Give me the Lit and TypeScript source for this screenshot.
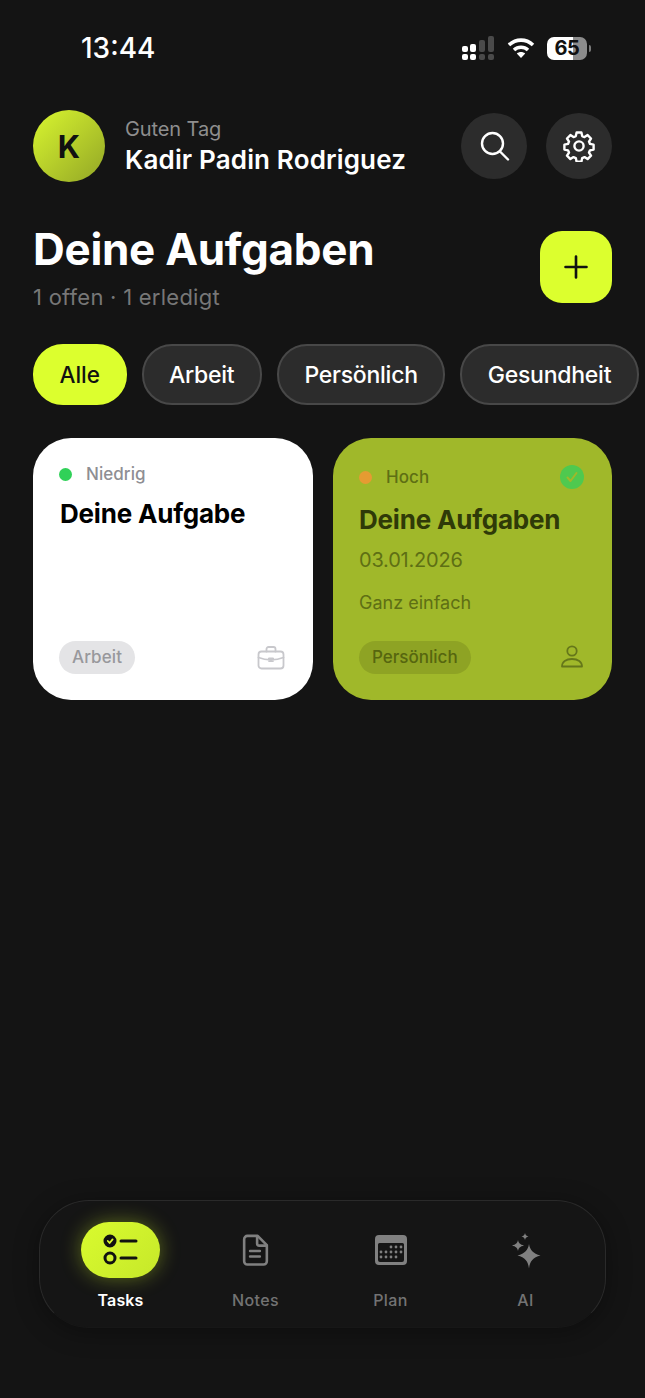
import { LitElement, html, css, svg } from 'lit';
import { customElement } from 'lit/decorators.js';

const ICONS = {
  search: svg`<circle cx="14.5" cy="13.5" r="10.5"/><path d="M22 21.5l8 8"/>`,
  gear: svg`<circle cx="16" cy="16" r="4.6"/><path d="M13.6 2.5h4.8l.8 3.6 2.3 1 3.1-2 3.4 3.4-2 3.1 1 2.3 3.6.8v4.8l-3.6.8-1 2.3 2 3.1-3.4 3.4-3.1-2-2.3 1-.8 3.6h-4.8l-.8-3.6-2.3-1-3.1 2-3.4-3.4 2-3.1-1-2.3-3.6-.8v-4.8l3.6-.8 1-2.3-2-3.1 3.4-3.4 3.1 2 2.3-1z"/>`,
  plus: svg`<path d="M16 4v24M4 16h24"/>`,
  briefcase: svg`<rect x="1.5" y="6.5" width="25" height="17" rx="3"/><path d="M9.5 6.5V4a2 2 0 0 1 2-2h5a2 2 0 0 1 2 2v2.5M1.5 12.5c4 1.6 8 2.3 12.5 2.3s8.500-.7 12.500-2.300M12 13.500h4v2.500h-4z"/>`,
  person: svg`<circle cx="12" cy="7" r="4.700"/><path d="M2 22.500c0-4.800 4-7.500 10-7.500s10 2.700 10 7.500z"/>`,
  note: svg`<path d="M5 1.500h9.500L23 10v15a3 3 0 0 1-3 3H5a3 3 0 0 1-3-3V4.500a3 3 0 0 1 3-3z"/><path d="M14 2v6.500a2 2 0 0 0 2 2h6.500M7.500 15.500h9M7.500 20.500h9"/>`,
};

type Card = {
  level: string;
  dot: string;
  title: string;
  date?: string;
  text?: string;
  tag: string;
  icon: 'briefcase' | 'person';
  done: boolean;
};

const CARDS: Card[] = [
  { level: 'Niedrig', dot: '#30d158', title: 'Deine Aufgabe', tag: 'Arbeit', icon: 'briefcase', done: false },
  {
    level: 'Hoch',
    dot: '#e69b32',
    title: 'Deine Aufgaben',
    date: '03.01.2026',
    text: 'Ganz einfach',
    tag: 'Persönlich',
    icon: 'person',
    done: true,
  },
];

const CHIPS = ['Alle', 'Arbeit', 'Persönlich', 'Gesundheit'];

@customElement('app-root')
export class AppRoot extends LitElement {
  static styles = css`
    :host {
      display: block;
      width: 645px;
      height: 1398px;
      overflow: hidden;
      background: #141414;
      color: #fff;
      font-family: Inter, 'Liberation Sans', sans-serif;
    }
    .page {
      height: 100%;
      display: flex;
      flex-direction: column;
    }
    .status {
      height: 96px;
      flex: none;
      display: flex;
      align-items: center;
      padding: 0 58px 0 81px;
      box-sizing: border-box;
    }
    .time {
      font-size: 28px;
      font-weight: 500;
      flex: 1;
    }
    .status-icons {
      display: flex;
      align-items: center;
      gap: 12px;
    }
    .battery {
      position: relative;
      width: 40px;
      height: 23px;
      border-radius: 7px;
      background: linear-gradient(90deg, #fff 0 65%, #8c8c8c 65% 100%);
      color: #111;
      font-size: 20px;
      font-weight: 700;
      line-height: 23px;
      text-align: center;
      letter-spacing: -0.5px;
    }
    .battery::after {
      content: '';
      position: absolute;
      right: -4px;
      top: 8px;
      width: 2px;
      height: 7px;
      border-radius: 0 2px 2px 0;
      background: #7a7a7a;
    }
    .header {
      display: flex;
      align-items: center;
      padding: 14px 33px 0;
    }
    .avatar {
      width: 72px;
      height: 72px;
      border-radius: 50%;
      background: linear-gradient(135deg, #d9f62f, #93a626);
      color: #111;
      font-size: 31px;
      font-weight: 700;
      display: flex;
      align-items: center;
      justify-content: center;
      flex: none;
    }
    .who {
      flex: 1;
      margin-left: 20px;
    }
    .hello {
      font-size: 20px;
      color: #8e8e8e;
      line-height: 26px;
      margin-top: 2px;
      letter-spacing: -0.1px;
    }
    .name {
      font-size: 26px;
      font-weight: 600;
      line-height: 36px;
      letter-spacing: 0.15px;
    }
    .round {
      width: 66px;
      height: 66px;
      border-radius: 50%;
      background: #2c2c2c;
      display: flex;
      align-items: center;
      justify-content: center;
      margin-left: 19px;
    }
    .round svg {
      width: 32px;
      height: 32px;
      fill: none;
      stroke: #fff;
      stroke-width: 2.400;
      stroke-linecap: round;
      stroke-linejoin: round;
    }
    .title-row {
      display: flex;
      justify-content: space-between;
      align-items: flex-start;
      padding: 49px 33px 0;
    }
    .title-text {
      margin-top: -9px;
    }
    h1 {
      margin: 0;
      font-size: 44px;
      font-weight: 700;
      line-height: 54px;
      letter-spacing: -0.3px;
    }
    .sub {
      font-size: 22px;
      color: #777;
      line-height: 28px;
      margin-top: 7px;
      letter-spacing: 0.25px;
    }
    .add {
      width: 72px;
      height: 72px;
      border-radius: 22px;
      background: #dcff2e;
      display: flex;
      align-items: center;
      justify-content: center;
      flex: none;
    }
    .add svg {
      width: 28px;
      height: 28px;
      fill: none;
      stroke: #111;
      stroke-width: 3;
      stroke-linecap: round;
    }
    .chips {
      display: flex;
      gap: 15px;
      padding: 33px 0 0 33px;
    }
    .chip {
      height: 61px;
      box-sizing: border-box;
      padding: 0 25.500px;
      border-radius: 30px;
      border: 2px solid #484848;
      background: #2c2c2c;
      display: flex;
      align-items: center;
      font-size: 23px;
      font-weight: 500;
      letter-spacing: -0.25px;
      white-space: nowrap;
    }
    .chip.on {
      background: #dcff2e;
      border-color: #dcff2e;
      color: #111;
      font-size: 22.500px;
      letter-spacing: 0;
      padding: 0 24.500px;
    }
    .cards {
      display: grid;
      grid-template-columns: 280px 279px;
      gap: 20px;
      padding: 33px 33px 0;
    }
    .card {
      height: 262px;
      box-sizing: border-box;
      border-radius: 38px;
      background: #fff;
      color: #000;
      padding: 26px 28px 26px 26px;
      display: flex;
      flex-direction: column;
    }
    .card.done {
      background: #a0b82a;
      color: #2f3a08;
      padding-top: 27px;
    }
    .level {
      display: flex;
      align-items: center;
      height: 20px;
      font-size: 17px;
      font-weight: 500;
      color: #8e8e93;
      letter-spacing: 0.05px;
    }
    .done .level {
      height: 24px;
      color: #5e6f14;
    }
    .dot {
      width: 13px;
      height: 13px;
      border-radius: 50%;
      margin-right: 14px;
    }
    .check {
      margin-left: auto;
      width: 24px;
      height: 24px;
      border-radius: 50%;
      background: #4fc94f;
      display: flex;
      align-items: center;
      justify-content: center;
    }
    .check svg {
      width: 14px;
      height: 14px;
      fill: none;
      stroke: #a0b82a;
      stroke-width: 2;
      stroke-linecap: round;
      stroke-linejoin: round;
    }
    .card-title {
      font-size: 26px;
      font-weight: 700;
      line-height: 34px;
      letter-spacing: -0.2px;
      margin: 13px 0 0 1px;
    }
    .done .card-title {
      margin-left: 0;
      margin-top: 14px;
    }
    .date {
      font-size: 20px;
      color: #5e6f14;
      line-height: 26px;
      margin-top: 10px;
      letter-spacing: -0.2px;
    }
    .text {
      font-size: 18px;
      color: #5e6f14;
      line-height: 24px;
      margin-top: 18px;
    }
    .card-foot {
      margin-top: auto;
      display: flex;
      align-items: center;
      justify-content: space-between;
    }
    .tag {
      height: 33px;
      padding: 0 13px;
      border-radius: 17px;
      background: #e4e4e6;
      color: #98989c;
      font-size: 17px;
      font-weight: 500;
      line-height: 33px;
      letter-spacing: 0.1px;
    }
    .done .tag {
      background: #8ea324;
      color: #56660f;
      letter-spacing: 0;
    }
    .card-foot svg {
      fill: none;
      stroke: #c8c8cc;
      stroke-width: 1.800;
      stroke-linecap: round;
      stroke-linejoin: round;
    }
    .done .card-foot svg {
      stroke: #65771a;
      margin-top: -3px;
    }
    .nav {
      margin: auto 39px 70px;
      height: 128px;
      box-sizing: border-box;
      border-radius: 50px;
      background: #151515;
      border: 1.500px solid #2a2a2a;
      border-bottom-color: #171717;
      box-shadow: 0 4px 24px rgba(0, 0, 0, 0.35);
      display: grid;
      grid-template-columns: repeat(4, 135px);
      padding: 21px 0 0 13px;
    }
    .tab {
      display: flex;
      flex-direction: column;
      align-items: center;
      color: #737373;
      font-size: 16px;
      font-weight: 500;
      letter-spacing: 0.4px;
    }
    .tab.on {
      color: #fff;
      font-weight: 600;
      letter-spacing: 0.1px;
    }
    .tab-icon {
      width: 79px;
      height: 56px;
      border-radius: 28px;
      display: flex;
      align-items: center;
      justify-content: center;
      margin-bottom: 12px;
    }
    .on .tab-icon {
      background: linear-gradient(135deg, #d9fb2e, #c6e82a);
      box-shadow: 0 0 20px rgba(200, 235, 40, 0.4);
    }
    .tab-icon svg {
      fill: none;
      stroke: #808080;
      stroke-width: 2.400;
      stroke-linecap: round;
      stroke-linejoin: round;
    }
  `;

  private renderCard(c: Card) {
    return html`
      <div class="card ${c.done ? 'done' : ''}">
        <div class="level">
          <span class="dot" style="background:${c.dot}"></span>${c.level}
          ${c.done
            ? html`<span class="check"><svg viewBox="0 0 14 14"><path d="M2.500 7.500l3 3.500 6-8"/></svg></span>`
            : ''}
        </div>
        <div class="card-title">${c.title}</div>
        ${c.date ? html`<div class="date">${c.date}</div>` : ''}
        ${c.text ? html`<div class="text">${c.text}</div>` : ''}
        <div class="card-foot">
          <span class="tag">${c.tag}</span>
          ${c.icon === 'briefcase'
            ? html`<svg width="28" height="26" viewBox="0 0 28 26">${ICONS.briefcase}</svg>`
            : html`<svg width="24" height="24" viewBox="0 0 24 24">${ICONS.person}</svg>`}
        </div>
      </div>
    `;
  }

  render() {
    return html`
      <div class="page">
        <div class="status">
          <div class="time">13:44</div>
          <div class="status-icons">
            <svg width="34" height="24" viewBox="0 0 34 24">
              <g fill="#fff">
                <rect x="1" y="10" width="6" height="6" rx="2"/><rect x="1" y="18" width="6" height="6" rx="2"/>
                <rect x="9" y="8" width="6" height="8" rx="2"/><rect x="9" y="18" width="6" height="6" rx="2"/>
              </g>
              <g fill="#4a4a4a">
                <rect x="18" y="4" width="6" height="12" rx="2"/><rect x="18" y="18" width="6" height="6" rx="2"/>
                <rect x="27" y="0" width="6" height="16" rx="2"/><rect x="27" y="18" width="6" height="6" rx="2"/>
              </g>
            </svg>
            <svg width="28" height="22" viewBox="0 0 28 22" fill="none" stroke="#fff" stroke-width="3.600">
              <path d="M2 8c7-6.500 17-6.500 24 0"/>
              <path d="M7 13c4-3.600 10-3.600 14 0"/>
              <path d="M14 21l-4.200-4.500c2.400-2 6-2 8.400 0z" fill="#fff" stroke="none"/>
            </svg>
            <div class="battery">65</div>
          </div>
        </div>

        <div class="header">
          <div class="avatar">K</div>
          <div class="who">
            <div class="hello">Guten Tag</div>
            <div class="name">Kadir Padin Rodriguez</div>
          </div>
          <div class="round"><svg viewBox="0 0 32 32">${ICONS.search}</svg></div>
          <div class="round"><svg viewBox="0 0 32 32">${ICONS.gear}</svg></div>
        </div>

        <div class="title-row">
          <div class="title-text">
            <h1>Deine Aufgaben</h1>
            <div class="sub">1 offen · 1 erledigt</div>
          </div>
          <div class="add"><svg viewBox="0 0 32 32">${ICONS.plus}</svg></div>
        </div>

        <div class="chips">
          ${CHIPS.map((c, i) => html`<div class="chip ${i === 0 ? 'on' : ''}">${c}</div>`)}
        </div>

        <div class="cards">${CARDS.map((c) => this.renderCard(c))}</div>

        <div class="nav">
          <div class="tab on">
            <div class="tab-icon">
              <svg width="36" height="32" viewBox="0 0 36 32" style="stroke:#111;stroke-width:3">
                <circle cx="7" cy="7" r="5" fill="#111"/>
                <path d="M4.800 7l1.800 2 3-3.600" stroke="#d9fb2e" stroke-width="1.800"/>
                <circle cx="7" cy="24" r="5"/>
                <path d="M18 7h15M18 24h15"/>
              </svg>
            </div>
            Tasks
          </div>
          <div class="tab">
            <div class="tab-icon"><svg width="27" height="33" viewBox="0 0 25 30">${ICONS.note}</svg></div>
            Notes
          </div>
          <div class="tab">
            <div class="tab-icon">
              <svg width="32" height="30" viewBox="0 0 32 30" style="stroke:none">
                <path fill-rule="evenodd" fill="#808080" d="M4 0h24a4 4 0 0 1 4 4v22a4 4 0 0 1-4 4H4a4 4 0 0 1-4-4V4a4 4 0 0 1 4-4zM4.500 8A1.500 1.500 0 0 0 3 9.500V25a2 2 0 0 0 2 2h22a2 2 0 0 0 2-2V9.500A1.500 1.500 0 0 0 27.500 8z"/>
                <g fill="#808080">
                  ${[12, 17, 22].map((y, r) =>
                    [7, 12, 17, 22, 27]
                      .filter((x) => !(r === 0 && x < 17) && !(r === 2 && x > 22))
                      .map((x) => svg`<circle cx=${x - 1} cy=${y} r="1.400"/>`),
                  )}
                </g>
              </svg>
            </div>
            Plan
          </div>
          <div class="tab">
            <div class="tab-icon">
              <svg width="32" height="36" viewBox="0 0 32 36" style="stroke:none;fill:#808080;margin-top:2px">
                <path d="M19 11c1 6 4 9.500 11.500 11.500C23 24.500 20 28 19 35.500 18 28 15 24.500 7.500 22.500 15 20.500 18 17 19 11z"/>
                <path d="M8 7c.5 3 2 4.500 6 5.500-4 1-5.500 2.500-6 5.500-.5-3-2-4.500-6-5.500 4-1 5.500-2.500 6-5.500z"/>
                <path d="M15 0c.4 2 1.200 2.800 3.500 3.500C16.200 4.200 15.400 5 15 7c-.4-2-1.200-2.800-3.500-3.500C13.800 2.800 14.600 2 15 0z"/>
              </svg>
            </div>
            AI
          </div>
        </div>
      </div>
    `;
  }
}
